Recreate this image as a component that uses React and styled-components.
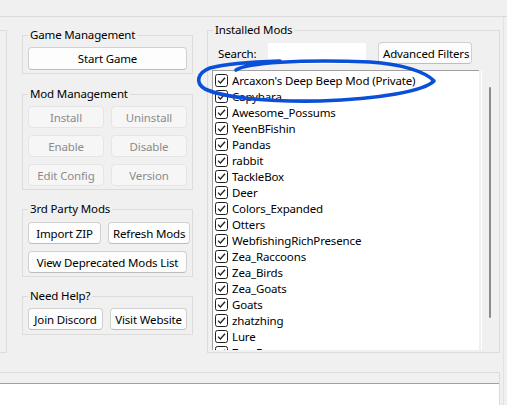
import styled, { createGlobalStyle } from 'styled-components'

const GlobalStyle = createGlobalStyle`
  html, body {
    margin: 0;
    height: 100%;
    overflow: hidden;
    background: #f0f0f0;
  }
  body {
    font-family: "Noto Sans", "Liberation Sans", sans-serif;
    font-size: 11.5px;
    letter-spacing: -0.15px;
    color: #000;
  }
  * { box-sizing: border-box; }
`

const TopBar = styled.div`
  height: 17px;
  border-bottom: 1px solid #dadada;
`

const Main = styled.div`
  width: 504px;
  height: 388px;
  border-right: 1px solid #e2e2e2;
  display: flex;
  flex-direction: column;
`

const Row = styled.div`
  display: flex;
  align-items: flex-start;
`

const Stub = styled.div`
  width: 7px;
  height: 323px;
  margin-top: 13px;
  border: 1px solid #dcdcdc;
  border-left: none;
`

const LeftColumn = styled.div`
  width: 171px;
  margin: 10px 0 0 15px;
  display: flex;
  flex-direction: column;
  gap: 11px;
`

const Group = styled.fieldset`
  margin: 0 0 ${p => p.$mb || 0}px;
  padding: ${p => p.$pt || 4}px ${p => p.$pr ?? 5}px ${p => p.$pb || 3}px ${p => p.$pl ?? 5}px;
  border: 1px solid #dcdcdc;
  min-width: 0;
`

const Legend = styled.legend`
  padding: 0 2px;
  margin-left: ${p => p.$ml || 0}px;
  line-height: 16px;
`

const ButtonGrid = styled.div`
  display: grid;
  grid-template-columns: ${p => p.$cols || '1fr 1fr'};
  gap: 7px;
  margin-top: ${p => p.$mt || 0}px;
`

const Button = styled.button`
  display: block;
  width: 100%;
  font: inherit;
  letter-spacing: inherit;
  height: ${p => p.$h || 22}px;
  padding: 0 4px;
  border-radius: 4px;
  white-space: nowrap;
  color: ${p => (p.disabled ? '#8b8b8b' : '#000')};
  background: ${p => (p.disabled ? '#f6f6f6' : '#fdfdfd')};
  border: 1px solid ${p => (p.disabled ? '#e5e5e5' : '#d0d0d0')};
  border-bottom-color: ${p => (p.disabled ? '#e5e5e5' : '#bdbdbd')};
`

const InstalledGroup = styled(Group)`
  width: 293px;
  margin: 5px 0 0 14px;
`

const SearchRow = styled.div`
  display: flex;
  align-items: center;
  height: 22px;
`

const SearchLabel = styled.span`
  width: 50px;
  margin-left: 6px;
`

const SearchInput = styled.input`
  width: 98px;
  height: 21px;
  border: none;
  background: #fff;
  outline: none;
  font: inherit;
`

const FilterButton = styled(Button)`
  margin-left: 12px;
  width: 94px;
`

const ListFrame = styled.div`
  display: flex;
  margin-top: 6px;
  height: 280px;
`

const ListBox = styled.div`
  width: 267px;
  height: 280px;
  background: #fff;
  border-top: 1px solid #a0a0a0;
  border-left: 1px solid #a0a0a0;
  padding-top: 1px;
  overflow: hidden;
`

const ListRow = styled.div`
  display: flex;
  align-items: center;
  height: 16px;
  padding-left: 2px;
  white-space: nowrap;
`

const CheckBox = styled.svg`
  width: 13px;
  height: 13px;
  flex: none;
  margin-right: 4px;
`

const Track = styled.div`
  width: 17px;
  margin-left: 2px;
  border-left: 1px solid #fff;
  padding: 17px 0 0 7px;
`

const Thumb = styled.div`
  width: 2px;
  height: 231px;
  background: #8a8a8a;
  border-radius: 1px;
`

const BottomBox = styled.div`
  margin-top: 19px;
  width: 500px;
  flex: 1;
  border-top: 1px solid #dcdcdc;
  border-right: 1px solid #dcdcdc;
  padding-top: 10px;
  display: flex;
`

const OutputBox = styled.div`
  width: 496px;
  flex: 1;
  background: #fff;
  border-top: 1px solid #a0a0a0;
`

const Scribble = styled.svg`
  position: absolute;
  left: 0;
  top: 0;
  width: 507px;
  height: 405px;
  pointer-events: none;
`

const mods = [
  "Arcaxon's Deep Beep Mod (Private)",
  'Capybara',
  'Awesome_Possums',
  'YeenBFishin',
  'Pandas',
  'rabbit',
  'TackleBox',
  'Deer',
  'Colors_Expanded',
  'Otters',
  'WebfishingRichPresence',
  'Zea_Raccoons',
  'Zea_Birds',
  'Zea_Goats',
  'Goats',
  'zhatzhing',
  'Lure',
  'Zea_Frogs',
]

const Check = () => (
  <CheckBox viewBox="0 0 13 13">
    <rect x="0.5" y="0.5" width="12" height="12" rx="2" fill="#fff" stroke="#1f1f1f" />
    <path d="M3 6.6 L5.4 9 L10 3.8" fill="none" stroke="#1f1f1f" strokeWidth="1.3" />
  </CheckBox>
)

export default function App() {
  return (
    <>
      <GlobalStyle />
      <TopBar />
      <Main>
        <Row>
          <Stub />
          <LeftColumn>
            <Group $mb={1}>
              <Legend>Game Management</Legend>
              <Button $h={23}>Start Game</Button>
            </Group>
            <Group>
              <Legend>Mod Management</Legend>
              <ButtonGrid>
                <Button disabled>Install</Button>
                <Button disabled>Uninstall</Button>
                <Button disabled>Enable</Button>
                <Button disabled>Disable</Button>
                <Button disabled>Edit Config</Button>
                <Button disabled>Version</Button>
              </ButtonGrid>
            </Group>
            <Group $pt={5}>
              <Legend>3rd Party Mods</Legend>
              <ButtonGrid $cols="73px 1fr">
                <Button>Import ZIP</Button>
                <Button>Refresh Mods</Button>
              </ButtonGrid>
              <ButtonGrid $cols="1fr" $mt={7}>
                <Button>View Deprecated Mods List</Button>
              </ButtonGrid>
            </Group>
            <Group $pb={4}>
              <Legend>Need Help?</Legend>
              <ButtonGrid $cols="75px 1fr">
                <Button>Join Discord</Button>
                <Button>Visit Website</Button>
              </ButtonGrid>
            </Group>
          </LeftColumn>
          <InstalledGroup $pl={4} $pr={1} $pb={2}>
            <Legend $ml={1}>Installed Mods</Legend>
            <SearchRow>
              <SearchLabel>Search:</SearchLabel>
              <SearchInput />
              <FilterButton>Advanced Filters</FilterButton>
            </SearchRow>
            <ListFrame>
              <ListBox>
                {mods.map(m => (
                  <ListRow key={m}>
                    <Check />
                    {m}
                  </ListRow>
                ))}
              </ListBox>
              <Track>
                <Thumb />
              </Track>
            </ListFrame>
          </InstalledGroup>
        </Row>
        <BottomBox>
          <OutputBox />
        </BottomBox>
      </Main>
      <Scribble viewBox="0 0 507 405">
        <path
          d="M236 70 C246 63 300 59 370 62 C402 64 426 72 434 81 C424 91 380 99 320 101 C270 102 224 98 205 89 C195 83 197 73 210 68 C225 64 250 62 280 61"
          fill="none"
          stroke="#0a4fd8"
          strokeWidth="3.6"
          strokeLinecap="round"
          strokeLinejoin="round"
        />
      </Scribble>
    </>
  )
}
